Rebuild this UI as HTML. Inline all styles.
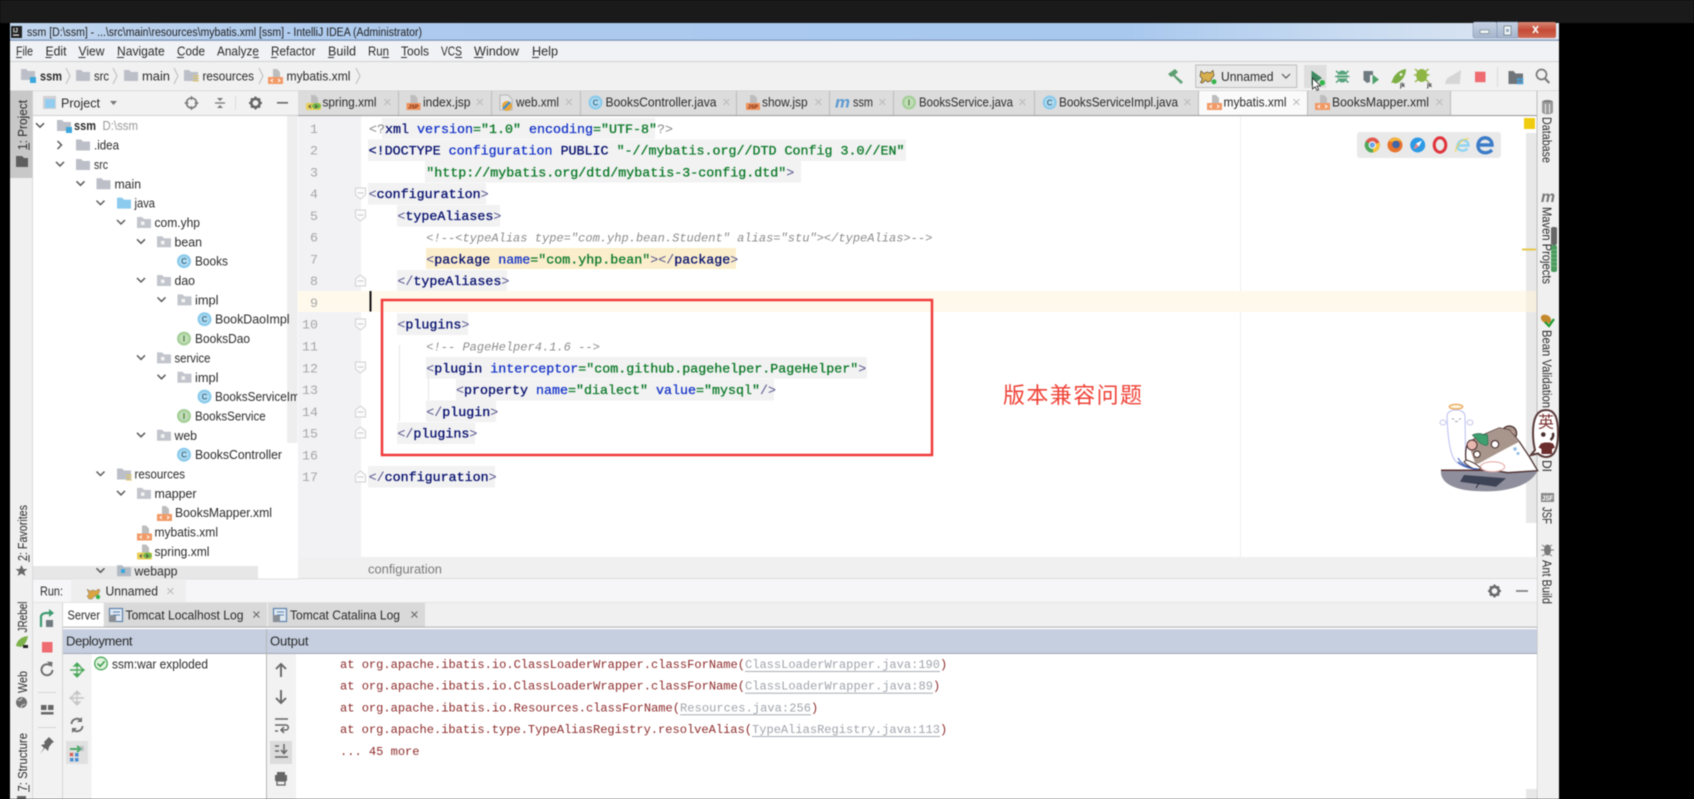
<!DOCTYPE html>
<html lang="en"><head><meta charset="utf-8"><title>ssm - IntelliJ IDEA</title>
<style>
html,body{margin:0;padding:0;background:#000;width:1694px;height:799px;overflow:hidden}
svg{display:block;filter:blur(.42px)}
text{font-family:"Liberation Sans","Noto Sans CJK SC",sans-serif;font-size:13.1px;fill:#2b2b2b;white-space:pre}
.m text{font-family:"Liberation Mono",monospace;font-size:13.33px}
.n{fill:#06106e;stroke:#06106e;stroke-width:.32}
.b{fill:#1232c8;stroke:#1232c8;stroke-width:.28}
.g{fill:#0d7a2a;stroke:#0d7a2a;stroke-width:.3}
.t{fill:#50508c}
.m text.cm{fill:#8c8c8c;font-style:italic;font-size:12.05px}
text.ln{font-family:"Liberation Mono",monospace;font-size:13.3px;fill:#a6a6a6;text-anchor:end}
text.o{font-family:"Liberation Mono",monospace;font-size:12.05px;fill:#8c2a2a}
text.l{fill:#a0a4ac}
text.x{fill:#bcbcbc;font-size:15px}
text.ic{font-size:8px;font-weight:bold;text-anchor:middle;fill:#3a6f8c}
text.jsp{font-size:5.5px;font-weight:bold;text-anchor:middle;fill:#7a2a10}
</style></head><body>
<svg width="1694" height="799" viewBox="0 0 1694 799" xmlns="http://www.w3.org/2000/svg">
<defs>
<linearGradient id="tb" x1="0" x2="1" y1="0" y2="0"><stop offset="0" stop-color="#c2d6ef"/><stop offset=".2" stop-color="#afcbee"/><stop offset=".72" stop-color="#a8c8ee"/><stop offset=".86" stop-color="#c8dbf1"/><stop offset="1" stop-color="#e0e8f2"/></linearGradient>
<linearGradient id="cl" x1="0" x2="0" y1="0" y2="1"><stop offset="0" stop-color="#d88a78"/><stop offset=".5" stop-color="#c44a35"/><stop offset="1" stop-color="#d06a55"/></linearGradient>
<linearGradient id="wb" x1="0" x2="0" y1="0" y2="1"><stop offset="0" stop-color="#c8d4e4"/><stop offset="1" stop-color="#a4b4cc"/></linearGradient>
<g id="f"><path d="M0 0h5l2 2h7v9H0z" fill="#bcbfc7"/></g>
<g id="p"><path d="M0 0h5l2 2h7v9H0z" fill="#c2c5cc"/><rect x="4" y="4.5" width="3.5" height="3.5" fill="#f4f4f4"/></g>
<g id="c"><circle r="7" fill="#8ccbec"/><circle r="4.6" fill="#b6def2"/></g>
<g id="i"><circle r="7" fill="#a6cf9a"/><circle r="4.6" fill="#c2dfb8"/></g>
<g id="x"><path d="M5 0h4l3 3v5H5z" fill="#bdbdbd"/><rect y="8" width="15" height="7" fill="#f29a66"/><path d="M5 10l-2 1.5 2 1.5M10 10l2 1.5-2 1.5" fill="none" stroke="#fff" stroke-width="1"/></g>
<g id="s"><path d="M5 0h4l3 3v5H5z" fill="#bdbdbd"/><rect y="8" width="15" height="7" rx="1" fill="#e8d05a"/><ellipse cx="10.5" cy="11" rx="4.500" ry="3" fill="#74b84a"/><path d="M5 10l-2 1.500 2 1.500M9 10l2 1.500-2 1.500" fill="none" stroke="#444" stroke-width="1"/></g>
<g id="j"><path d="M4 0h4l3 3v5H4z" fill="#bdbdbd"/><rect y="8" width="14" height="7" fill="#f0945e"/></g>
<g id="k"><path d="M0 -2.500l4 4 4-4" fill="none" stroke="#5a5a5a" stroke-width="1.500"/></g>
<clipPath id="tc"><rect x="33" y="115" width="264.500" height="464"/></clipPath>
</defs>

<!-- frame -->
<rect width="1694" height="799" fill="#000"/>
<rect width="1694" height="23" fill="#1a1a1a"/>
<rect x="10" y="23" width="1549" height="776" fill="#f0f0f0"/>

<!-- title bar -->
<rect x="10" y="23" width="1549" height="17" fill="url(#tb)"/>
<rect x="10" y="39.500" width="1549" height="1.300" fill="#7e97b8"/>
<rect x="11" y="26" width="11" height="12" fill="#222"/><rect x="13" y="34.500" width="6" height="1.200" fill="#eee"/><text x="13" y="32.500" style="font-size:6px;font-weight:bold;fill:#eee">IJ</text>
<text x="27" y="36" textLength="395" lengthAdjust="spacingAndGlyphs" style="font-size:11.500px;fill:#1f1f1f">ssm [D:\ssm] - ...\src\main\resources\mybatis.xml [ssm] - IntelliJ IDEA (Administrator)</text>
<rect x="1473" y="22" width="24" height="16" rx="2" fill="url(#wb)" stroke="#8296b0" stroke-width=".6"/>
<rect x="1497" y="22" width="21" height="16" fill="url(#wb)" stroke="#8296b0" stroke-width=".6"/>
<rect x="1518" y="22" width="38" height="16" rx="2" fill="url(#cl)"/>
<rect x="1480" y="30" width="9" height="3.500" fill="#eef3f8" stroke="#566" stroke-width=".5"/>
<rect x="1504" y="26" width="7" height="9" fill="#eef3f8" stroke="#566" stroke-width=".6"/><rect x="1506" y="29" width="3" height="3" fill="#9ab"/>
<path d="M1533 26l5 7M1538 26l-5 7" stroke="#f5f5f5" stroke-width="1.700"/>

<!-- menu -->
<rect x="10" y="41" width="1549" height="20" fill="#f1f2f5"/>
<rect x="10" y="61" width="1549" height="1" fill="#d2d2d2"/>
<g>
<text x="16" y="55.500" textLength="17" lengthAdjust="spacingAndGlyphs">File</text>
<text x="45.500" y="55.500" textLength="21" lengthAdjust="spacingAndGlyphs">Edit</text>
<text x="78.500" y="55.500" textLength="26" lengthAdjust="spacingAndGlyphs">View</text>
<text x="117" y="55.500" textLength="47.700" lengthAdjust="spacingAndGlyphs">Navigate</text>
<text x="177" y="55.500" textLength="28" lengthAdjust="spacingAndGlyphs">Code</text>
<text x="217" y="55.500" textLength="42" lengthAdjust="spacingAndGlyphs">Analyze</text>
<text x="271" y="55.500" textLength="44.500" lengthAdjust="spacingAndGlyphs">Refactor</text>
<text x="328" y="55.500" textLength="28" lengthAdjust="spacingAndGlyphs">Build</text>
<text x="368" y="55.500" textLength="21" lengthAdjust="spacingAndGlyphs">Run</text>
<text x="401" y="55.500" textLength="28" lengthAdjust="spacingAndGlyphs">Tools</text>
<text x="441" y="55.500" textLength="21" lengthAdjust="spacingAndGlyphs">VCS</text>
<text x="474" y="55.500" textLength="45" lengthAdjust="spacingAndGlyphs">Window</text>
<text x="532" y="55.500" textLength="26" lengthAdjust="spacingAndGlyphs">Help</text>
</g>
<g fill="#333"><rect x="16" y="57" width="6" height="1"/><rect x="45.500" y="57" width="6" height="1"/><rect x="78.500" y="57" width="7" height="1"/><rect x="117" y="57" width="7" height="1"/><rect x="177" y="57" width="7" height="1"/><rect x="253" y="57" width="6" height="1"/><rect x="271" y="57" width="6" height="1"/><rect x="328" y="57" width="6" height="1"/><rect x="382" y="57" width="7" height="1"/><rect x="401" y="57" width="6" height="1"/><rect x="455" y="57" width="7" height="1"/><rect x="474" y="57" width="9" height="1"/><rect x="532" y="57" width="7" height="1"/></g>

<!-- breadcrumb -->
<rect x="10" y="62" width="1549" height="29" fill="#f1f1f1"/>
<rect x="10" y="90.500" width="1549" height="1" fill="#c8c8c8"/>
<use href="#f" x="21" y="69"/><rect x="30" y="77" width="6" height="6" fill="#3ca7dc"/>
<text x="40" y="80.500" textLength="22" lengthAdjust="spacingAndGlyphs" style="font-weight:bold">ssm</text>
<path d="M66 68l4 8-4 8" fill="none" stroke="#bbb"/>
<use href="#f" x="76" y="70"/><text x="94" y="80.500" textLength="15" lengthAdjust="spacingAndGlyphs">src</text>
<path d="M113 68l4 8-4 8" fill="none" stroke="#bbb"/>
<use href="#f" x="124" y="70"/><text x="142" y="80.500" textLength="28" lengthAdjust="spacingAndGlyphs">main</text>
<path d="M174 68l4 8-4 8" fill="none" stroke="#bbb"/>
<use href="#f" x="184" y="70"/><path d="M193 76h6M193 78.500h6M193 81h6" stroke="#e3c45a"/><text x="202.500" y="80.500" textLength="51.500" lengthAdjust="spacingAndGlyphs">resources</text>
<path d="M259 68l4 8-4 8" fill="none" stroke="#bbb"/>
<use href="#x" x="268" y="69"/><text x="286.500" y="80.500" textLength="64" lengthAdjust="spacingAndGlyphs">mybatis.xml</text>
<path d="M356 68l4 8-4 8" fill="none" stroke="#bbb"/>

<!-- toolbar right -->
<path d="M1168 74l7-5 3 3-3 3 8 7-2 2-8-8-2 1z" fill="#5d9f73"/>
<rect x="1195.700" y="65" width="101" height="22.500" fill="#e9e9e9" stroke="#bdbdbd"/>
<path d="M1201 71l3 2.500 3-1.500 3 1 3-2.500 1 5-2.500 3-1 2.500-3 1-2-2-3 3-2-.5 2-3.500-2.500-3z" fill="#d9b04e" stroke="#6a5a3a" stroke-width=".8"/><circle cx="1214" cy="81.700" r="2.500" fill="#36b24a"/>
<text x="1221" y="81" textLength="52.500" lengthAdjust="spacingAndGlyphs">Unnamed</text>
<path d="M1282 74l4 4 4-4" fill="none" stroke="#555" stroke-width="1.200"/>
<rect x="1304" y="65" width="22.500" height="23" fill="#dedede"/>
<path d="M1311.500 70.500l10.500 7.500-10.500 7.500z" fill="#3f8a63"/><circle cx="1322.300" cy="82.700" r="2.700" fill="#2fb84a"/>
<path d="M1312.500 78v11l2.600-2.200 1.900 3.700 1.700-.9-1.800-3.600h3.600z" fill="#fff" stroke="#222" stroke-width=".8"/>
<path d="M1336 71l2.500 2M1348.500 71l-2.500 2M1335 76.500h3M1349.500 76.500h-3M1336 82.500l2.500-2M1348.500 82.500l-2.500-2" stroke="#55a27c" stroke-width="1.500"/><ellipse cx="1342.300" cy="76.500" rx="5" ry="6" fill="#55a27c"/><path d="M1338 75h8.500M1338 78h8.500" stroke="#d8ecd8" stroke-width=".9"/>
<path d="M1363.500 71h9.500v4h-3v7l-3 1-3.500-3z" fill="#6f7a80"/><path d="M1372.500 74.500l6.500 5-6.500 5z" fill="#4fa06c"/>
<path d="M1406 69c-7 1-12 6-13.500 11l-1.500 3 2.500-.5c.8 1 1.500 1 2.500 1 6-2 10-8 10-14.500z" fill="#7cae45"/><circle cx="1401" cy="74.500" r="1.500" fill="#e6f0d8"/><text x="1400" y="87" style="font-size:6px;font-weight:bold">jk</text>
<path d="M1415 69l3.500 3M1428.500 69l-3.500 3M1414 75h4M1429.500 75h-4M1415 82l3.500-3M1428.500 82l-3.500-3" stroke="#8fb545" stroke-width="1.400"/><ellipse cx="1421.700" cy="75.500" rx="5.500" ry="6.500" fill="#8fb545"/><text x="1427" y="87" style="font-size:6px;font-weight:bold">jk</text>
<path d="M1445 84c1-5 3-7 6-8l10-6c0 5-1 8-1 14z" fill="#d6d6d6"/>
<rect x="1475" y="71.700" width="10.500" height="10.500" fill="#ee6b70"/>
<rect x="1497" y="67" width="1" height="20" fill="#dadada"/>
<path d="M1508.500 71h5l2 2.500h7.500v10.500h-14.500z" fill="#70757a"/><rect x="1517" y="78" width="2.800" height="2.800" fill="#4b9fd8"/><rect x="1520.500" y="78" width="2.800" height="2.800" fill="#4b9fd8"/><rect x="1517" y="81.500" width="2.800" height="2.800" fill="#4b9fd8"/><rect x="1520.500" y="81.500" width="2.800" height="2.800" fill="#4b9fd8"/>
<circle cx="1541.500" cy="74.500" r="5" fill="none" stroke="#7a7a7a" stroke-width="1.700"/><path d="M1545 78.500l4.300 4.500" stroke="#7a7a7a" stroke-width="2.200"/>

<!-- left stripe -->
<rect x="10" y="91" width="22.500" height="708" fill="#f0f0f0"/>
<rect x="32.300" y="91" width="1" height="708" fill="#cfcfcf"/>
<rect x="10" y="91" width="22.300" height="87" fill="#c8c8c8"/>
<g><text transform="translate(27,150) rotate(-90)" textLength="50" lengthAdjust="spacingAndGlyphs">1: Project</text>
<rect x="28.500" y="143" width="1" height="7" fill="#333"/>
<path d="M16 156h6l2 2h4v9H16z" fill="#5e5e5e"/>
<text transform="translate(27,561) rotate(-90)" textLength="56" lengthAdjust="spacingAndGlyphs">2: Favorites</text>
<rect x="28.500" y="555" width="1" height="7" fill="#333"/>
<path d="M21.500 565l1.800 4h4.200l-3.400 2.700 1.400 4.300-4-2.500-4 2.500 1.400-4.300-3.400-2.700h4.200z" fill="#666"/>
<text transform="translate(27,632.500) rotate(-90)" textLength="31" lengthAdjust="spacingAndGlyphs">JRebel</text>
<path d="M16 646c1-5 4-9 12-10-1 5-3 9-7 11z" fill="#7db24a"/><rect x="23" y="645" width="5" height="3" fill="#222"/>
<text transform="translate(27,693) rotate(-90)" textLength="22" lengthAdjust="spacingAndGlyphs">Web</text>
<circle cx="21.500" cy="702.500" r="5.500" fill="#707070"/><path d="M18 700c2 1 3 0 4-2M21 708c0-3 2-3 4-4" stroke="#ddd" fill="none"/>
<text transform="translate(27,791.500) rotate(-90)" textLength="58.500" lengthAdjust="spacingAndGlyphs">7: Structure</text>
<rect x="28.500" y="785" width="1" height="7" fill="#333"/>
<rect x="17" y="796" width="9" height="3" fill="#666"/></g>

<!-- project panel header -->
<rect x="33" y="91" width="265" height="24" fill="#f2f2f2"/>
<rect x="43" y="96" width="13" height="13" fill="#d0d0d4"/><rect x="45" y="99" width="10" height="9" fill="#92cdf0"/>
<text x="61" y="107.500" textLength="39" lengthAdjust="spacingAndGlyphs">Project</text>
<path d="M110 101h7l-3.500 4z" fill="#777"/>
<circle cx="191.500" cy="103" r="5" fill="none" stroke="#777" stroke-width="1.600"/><path d="M191.500 96v4M191.500 106v4M184.500 103h4M194.500 103h4" stroke="#777" stroke-width="1.200"/>
<path d="M215 103h10" stroke="#777" stroke-width="1.300"/><path d="M220 101l-3-3h6zM220 105l-3 3h6z" fill="#777"/>
<rect x="235" y="96" width="1" height="14" fill="#dcdcdc"/>
<circle cx="255.500" cy="103" r="4.200" fill="none" stroke="#666" stroke-width="2.600"/><path d="M255.500 96.500v2M255.500 107.500v2M249 103h2M260 103h2M251 98.500l1.500 1.500M260 98.500l-1.500 1.500M251 107.500l1.500-1.500M260 107.500l-1.500-1.500" stroke="#666" stroke-width="2"/>
<rect x="277" y="102" width="11" height="1.600" fill="#666"/>
<rect x="33" y="115" width="265" height="1" fill="#cfcfcf"/>

<!-- project tree -->
<rect x="33" y="116" width="265" height="463" fill="#fff"/>
<rect x="287" y="116" width="10.500" height="327" fill="#eeeeee"/>
<rect x="33" y="566" width="225" height="12.500" fill="#e7e7e7"/>
<g clip-path="url(#tc)">
<use href="#k" x="36" y="125.700"/><use href="#f" x="57" y="120"/><rect x="66" y="127" width="6" height="6" fill="#3ca7dc"/>
<text x="74" y="130.200" textLength="22" lengthAdjust="spacingAndGlyphs" style="font-weight:bold">ssm</text><text x="102.500" y="130.200" textLength="35.500" lengthAdjust="spacingAndGlyphs" style="fill:#9a9a9a">D:\ssm</text>
<path d="M57.500 141l4 4-4 4" fill="none" stroke="#5a5a5a" stroke-width="1.500"/><use href="#f" x="76" y="139.500"/><text x="94" y="149.500" textLength="25" lengthAdjust="spacingAndGlyphs">.idea</text>
<use href="#k" x="56" y="164.400"/><use href="#f" x="76" y="159"/><text x="94" y="168.900" textLength="14" lengthAdjust="spacingAndGlyphs">src</text>
<use href="#k" x="76.500" y="183.800"/><use href="#f" x="96.500" y="178.300"/><text x="114.500" y="188.300" textLength="26.500" lengthAdjust="spacingAndGlyphs">main</text>
<use href="#k" x="96.500" y="203.100"/><path d="M117 197.600h5l2 2h7v9h-14z" fill="#8dcbee"/><text x="134.500" y="207.600" textLength="20.500" lengthAdjust="spacingAndGlyphs">java</text>
<use href="#k" x="117" y="222.500"/><use href="#p" x="137" y="217"/><text x="154.500" y="227" textLength="45.500" lengthAdjust="spacingAndGlyphs">com.yhp</text>
<use href="#k" x="137" y="241.800"/><use href="#p" x="157" y="236.300"/><text x="174.500" y="246.300" textLength="27.500" lengthAdjust="spacingAndGlyphs">bean</text>
<use href="#c" x="184" y="261.200"/><text class="ic" x="184" y="264">C</text><text x="195" y="265.700" textLength="33" lengthAdjust="spacingAndGlyphs">Books</text>
<use href="#k" x="137" y="280.500"/><use href="#p" x="157" y="275"/><text x="174.500" y="285" textLength="20.500" lengthAdjust="spacingAndGlyphs">dao</text>
<use href="#k" x="157.500" y="299.900"/><use href="#p" x="177.500" y="294.400"/><text x="195" y="304.400" textLength="23.500" lengthAdjust="spacingAndGlyphs">impl</text>
<use href="#c" x="204.500" y="319.200"/><text class="ic" x="204.500" y="322">C</text><text x="215" y="323.700" textLength="74.500" lengthAdjust="spacingAndGlyphs">BookDaoImpl</text>
<use href="#i" x="184" y="338.600"/><text class="ic" x="184" y="341.400" style="fill:#4d7a42">I</text><text x="195" y="343.100" textLength="55" lengthAdjust="spacingAndGlyphs">BooksDao</text>
<use href="#k" x="137" y="357.900"/><use href="#p" x="157" y="352.400"/><text x="174.500" y="362.400" textLength="36" lengthAdjust="spacingAndGlyphs">service</text>
<use href="#k" x="157.500" y="377.300"/><use href="#p" x="177.500" y="371.800"/><text x="195" y="381.800" textLength="23.500" lengthAdjust="spacingAndGlyphs">impl</text>
<use href="#c" x="204.500" y="396.600"/><text class="ic" x="204.500" y="399.400">C</text><text x="215" y="401.100" textLength="94" lengthAdjust="spacingAndGlyphs">BooksServiceImpl</text>
<use href="#i" x="184" y="416"/><text class="ic" x="184" y="418.800" style="fill:#4d7a42">I</text><text x="195" y="420.500" textLength="70.700" lengthAdjust="spacingAndGlyphs">BooksService</text>
<use href="#k" x="137" y="435.300"/><use href="#p" x="157" y="429.800"/><text x="174.500" y="439.800" textLength="22.500" lengthAdjust="spacingAndGlyphs">web</text>
<use href="#c" x="184" y="454.700"/><text class="ic" x="184" y="457.500">C</text><text x="195" y="459.200" textLength="87" lengthAdjust="spacingAndGlyphs">BooksController</text>
<use href="#k" x="96.500" y="474"/><use href="#f" x="117" y="468.500"/><path d="M126 475h6M126 477.500h6M126 480h6" stroke="#e3c45a"/><text x="134.500" y="478.500" textLength="50.500" lengthAdjust="spacingAndGlyphs">resources</text>
<use href="#k" x="117" y="493.400"/><use href="#p" x="137" y="487.900"/><text x="154.500" y="497.900" textLength="42" lengthAdjust="spacingAndGlyphs">mapper</text>
<use href="#x" x="157" y="506"/><text x="175" y="517.200" textLength="97" lengthAdjust="spacingAndGlyphs">BooksMapper.xml</text>
<use href="#x" x="137" y="525.500"/><text x="154.500" y="536.600" textLength="63.500" lengthAdjust="spacingAndGlyphs">mybatis.xml</text>
<use href="#s" x="137" y="544.500"/><text x="154.500" y="555.900" textLength="55" lengthAdjust="spacingAndGlyphs">spring.xml</text>
<use href="#k" x="96.500" y="570.800"/><path d="M117 565.300h5l2 2h7v9h-14z" fill="#b4bac4"/><rect x="121" y="569" width="4" height="4" fill="#3ca7dc"/><text x="134.500" y="575.300" textLength="43" lengthAdjust="spacingAndGlyphs">webapp</text>
</g>

<!-- editor tabs -->
<rect x="298" y="91" width="1239" height="24" fill="#f2f2f2"/>
<rect x="298" y="91" width="1152" height="24" fill="#dcdcdc"/>
<rect x="1198.500" y="91" width="108.500" height="24" fill="#fafafa"/>
<g fill="#bcbcbc"><rect x="398" y="91" width="1" height="24"/><rect x="491" y="91" width="1" height="24"/><rect x="580" y="91" width="1" height="24"/><rect x="736" y="91" width="1" height="24"/><rect x="829" y="91" width="1" height="24"/><rect x="893" y="91" width="1" height="24"/><rect x="1034" y="91" width="1" height="24"/><rect x="1198" y="91" width="1" height="24"/><rect x="1307" y="91" width="1" height="24"/><rect x="1450" y="91" width="1" height="24"/></g>
<rect x="298" y="115" width="1239" height="1.200" fill="#9d9d9d"/>
<use href="#s" x="306" y="95"/><text x="322.500" y="106.500" textLength="54" lengthAdjust="spacingAndGlyphs">spring.xml</text><text class="x" x="383" y="107">×</text>
<use href="#j" x="406.500" y="95"/><text class="jsp" x="413.500" y="108.500">JSP</text><text x="423" y="106.500" textLength="47.500" lengthAdjust="spacingAndGlyphs">index.jsp</text><text class="x" x="475.500" y="107">×</text>
<path d="M500 95h8l4 4v11h-12z" fill="#e6e6e6" stroke="#aaa" stroke-width=".8"/><circle cx="507" cy="106" r="5" fill="#e8a53a"/><path d="M503 109l7-7" stroke="#3b8fd8" stroke-width="2"/>
<text x="516" y="106.500" textLength="43" lengthAdjust="spacingAndGlyphs">web.xml</text><text class="x" x="564.500" y="107">×</text>
<use href="#c" x="595.500" y="102.500"/><text class="ic" x="595.500" y="105.300">C</text><text x="605.500" y="106.500" textLength="111" lengthAdjust="spacingAndGlyphs">BooksController.java</text><text class="x" x="722" y="107">×</text>
<use href="#j" x="746" y="95"/><text class="jsp" x="753" y="108.500">JSP</text><text x="762" y="106.500" textLength="45.600" lengthAdjust="spacingAndGlyphs">show.jsp</text><text class="x" x="814" y="107">×</text>
<text x="835" y="107.500" textLength="15" lengthAdjust="spacingAndGlyphs" style="font-size:16px;font-style:italic;font-weight:bold;fill:#5d9ad2">m</text>
<text x="853" y="106.500" textLength="20" lengthAdjust="spacingAndGlyphs">ssm</text><text class="x" x="878" y="107">×</text>
<use href="#i" x="909" y="102.500"/><text class="ic" x="909" y="105.300" style="fill:#4d7a42">I</text><text x="919" y="106.500" textLength="94" lengthAdjust="spacingAndGlyphs">BooksService.java</text><text class="x" x="1018" y="107">×</text>
<use href="#c" x="1049.700" y="102.500"/><text class="ic" x="1049.700" y="105.300">C</text><text x="1059" y="106.500" textLength="119" lengthAdjust="spacingAndGlyphs">BooksServiceImpl.java</text><text class="x" x="1183" y="107">×</text>
<use href="#x" x="1207" y="95"/><text x="1223.500" y="106.500" textLength="63" lengthAdjust="spacingAndGlyphs">mybatis.xml</text><text class="x" x="1292" y="107">×</text>
<use href="#x" x="1315" y="95"/><text x="1332" y="106.500" textLength="97" lengthAdjust="spacingAndGlyphs">BooksMapper.xml</text><text class="x" x="1435" y="107">×</text>

<!-- editor -->
<rect x="298" y="116.200" width="63" height="441" fill="#f2f2f4"/>
<rect x="361" y="116.200" width="1176" height="441" fill="#fff"/>
<rect x="1240" y="116.200" width="1" height="441" fill="#eeeeee"/>
<rect x="298" y="291" width="1239" height="21" fill="#fff9ec"/>
<!-- tag backgrounds -->
<g fill="#f2f2f2">
<rect x="382" y="118" width="273" height="21"/>
<rect x="368" y="139.500" width="538" height="21.500"/>
<rect x="425" y="161" width="376" height="21.500"/>
<rect x="368" y="183" width="118" height="21.500"/>
<rect x="397" y="205" width="103" height="21.500"/>
<rect x="397" y="270" width="110" height="21"/>
<rect x="397" y="313.500" width="71" height="21.500"/>
<rect x="426" y="357" width="441" height="21.500"/>
<rect x="456" y="379" width="318" height="21.500"/>
<rect x="426" y="400.500" width="70" height="21.500"/>
<rect x="397" y="422.500" width="78" height="21.500"/>
<rect x="368" y="466" width="127" height="21.500"/>
</g>
<rect x="426" y="248" width="310" height="21" fill="#fbeecc"/>
<rect x="399" y="345" width="1" height="76" fill="#e6e6e6"/><rect x="428" y="367" width="1" height="33" fill="#e6e6e6"/>

<!-- line numbers -->
<text class="ln" x="318" y="133">1</text><text class="ln" x="318" y="154.500">2</text><text class="ln" x="318" y="176.300">3</text><text class="ln" x="318" y="198">4</text><text class="ln" x="318" y="219.800">5</text><text class="ln" x="318" y="241.600">6</text><text class="ln" x="318" y="263.400">7</text><text class="ln" x="318" y="285.200">8</text><text class="ln" x="318" y="307">9</text><text class="ln" x="318" y="328.700">10</text><text class="ln" x="318" y="350.500">11</text><text class="ln" x="318" y="372.300">12</text><text class="ln" x="318" y="394">13</text><text class="ln" x="318" y="415.800">14</text><text class="ln" x="318" y="437.600">15</text><text class="ln" x="318" y="459.400">16</text><text class="ln" x="318" y="481.100">17</text>
<!-- fold markers -->
<g fill="#fbfbfb" stroke="#d0d0d0">
<path d="M355.500 188h10v7l-5 4-5-4z"/><path d="M355.500 210h10v7l-5 4-5-4z"/><path d="M355.500 319h10v7l-5 4-5-4z"/><path d="M355.500 362h10v7l-5 4-5-4z"/>
<path d="M355.500 286v-7l5-4 5 4v7z"/><path d="M355.500 417v-7l5-4 5 4v7z"/><path d="M355.500 438v-7l5-4 5 4v7z"/><path d="M355.500 482v-7l5-4 5 4v7z"/>
</g>
<path d="M357.500 193h6M357.500 215h6M357.500 324h6M357.500 367h6M357.500 281h6M357.500 412h6M357.500 433h6M357.500 477h6" stroke="#c8c8c8"/>

<!-- code -->
<g class="m">
<text x="369" y="132.800"><tspan style="fill:#888">&lt;?</tspan><tspan class="n">xml</tspan> <tspan class="b">version</tspan><tspan class="g">="1.0"</tspan> <tspan class="b">encoding</tspan><tspan class="g">="UTF-8"</tspan><tspan style="fill:#888">?&gt;</tspan></text>
<text x="368.600" y="154.600"><tspan class="n">&lt;!DOCTYPE</tspan> <tspan class="b">configuration</tspan> <tspan class="n">PUBLIC</tspan> <tspan class="g">"-//mybatis.org//DTD Config 3.0//EN"</tspan></text>
<text x="426.300" y="176.300"><tspan class="g">"http://mybatis.org/dtd/mybatis-3-config.dtd"</tspan><tspan class="t">&gt;</tspan></text>
<text x="368.600" y="198"><tspan class="t">&lt;</tspan><tspan class="n">configuration</tspan><tspan class="t">&gt;</tspan></text>
<text x="397.400" y="219.800"><tspan class="t">&lt;</tspan><tspan class="n">typeAliases</tspan><tspan class="t">&gt;</tspan></text>
<text x="426.300" y="241.600" class="cm">&lt;!--&lt;typeAlias type="com.yhp.bean.Student" alias="stu"&gt;&lt;/typeAlias&gt;--&gt;</text>
<text x="426.300" y="263.400"><tspan class="t">&lt;</tspan><tspan class="n">package</tspan> <tspan class="b">name</tspan><tspan class="g">="com.yhp.bean"</tspan><tspan class="t">&gt;&lt;/</tspan><tspan class="n">package</tspan><tspan class="t">&gt;</tspan></text>
<text x="397.400" y="285.100"><tspan class="t">&lt;/</tspan><tspan class="n">typeAliases</tspan><tspan class="t">&gt;</tspan></text>
<text x="397.400" y="328.700"><tspan class="t">&lt;</tspan><tspan class="n">plugins</tspan><tspan class="t">&gt;</tspan></text>
<text x="426.300" y="350.500" class="cm">&lt;!-- PageHelper4.1.6 --&gt;</text>
<text x="426.300" y="372.300"><tspan class="t">&lt;</tspan><tspan class="n">plugin</tspan> <tspan class="b">interceptor</tspan><tspan class="g">="com.github.pagehelper.PageHelper"</tspan><tspan class="t">&gt;</tspan></text>
<text x="456" y="394"><tspan class="t">&lt;</tspan><tspan class="n">property</tspan> <tspan class="b">name</tspan><tspan class="g">="dialect"</tspan> <tspan class="b">value</tspan><tspan class="g">="mysql"</tspan><tspan class="t">/&gt;</tspan></text>
<text x="426.300" y="415.800"><tspan class="t">&lt;/</tspan><tspan class="n">plugin</tspan><tspan class="t">&gt;</tspan></text>
<text x="397.400" y="437.600"><tspan class="t">&lt;/</tspan><tspan class="n">plugins</tspan><tspan class="t">&gt;</tspan></text>
<text x="368.600" y="481.100"><tspan class="t">&lt;/</tspan><tspan class="n">configuration</tspan><tspan class="t">&gt;</tspan></text>
</g>
<rect x="369.500" y="291" width="2" height="20.500" fill="#111"/>
<rect x="382" y="300" width="550" height="155" fill="none" stroke="#f03a3a" stroke-width="2.500"/>
<text x="1003" y="403" textLength="139" style="font-size:22px;fill:#ef4136;font-family:'Noto Sans CJK SC','WenQuanYi Zen Hei',sans-serif">版本兼容问题</text>

<!-- browser icons -->
<rect x="1357" y="132" width="144" height="26" rx="3" fill="#e9e9e9"/>
<circle cx="1372.300" cy="145" r="7.500" fill="#e2574c"/><path d="M1372.300 145l-6.500-3.700a7.500 7.500 0 0 0 7.500 11.200z" fill="#4fa95a"/><path d="M1372.300 145l1 7.500a7.500 7.500 0 0 0 6-10z" fill="#f4c63d"/><circle cx="1372.300" cy="145" r="3.200" fill="#6aa4e6" stroke="#fff"/>
<circle cx="1395" cy="145" r="7.500" fill="#e8732c"/><circle cx="1396" cy="144.500" r="3.800" fill="#3f66a8"/><path d="M1389 141c3-4 11-5 13 1-3-2-7-2-10 0z" fill="#f4b93c"/>
<circle cx="1417.700" cy="145" r="7.500" fill="#2d9ae6"/><path d="M1422 140.500l-3 6-3-3z" fill="#fff"/><path d="M1413.500 149.500l5.500-3-3-3z" fill="#e88"/>
<ellipse cx="1440" cy="145" rx="5.800" ry="7.200" fill="none" stroke="#e0333c" stroke-width="3"/>
<path d="M1457 145.500h11.500c0-6-9-8-11 0-1 5 6 7 10 3" fill="none" stroke="#8fd4f0" stroke-width="2.400"/><path d="M1456 152c-2-4 6-14 13-13" fill="none" stroke="#f2d04a" stroke-width="1"/>
<path d="M1479.500 145h12.500c0-9-13-10-14 0-.5 8 9 10 14 5" fill="none" stroke="#3b7cc8" stroke-width="3.400"/>

<!-- right scrollbar/stripe -->
<rect x="1526" y="133" width="11" height="390" fill="#e8e8e8"/>
<rect x="1526" y="291" width="11" height="21" fill="#f6efdf"/>
<rect x="1524" y="118" width="11" height="11" fill="#f0cc10"/>
<rect x="1522" y="248.500" width="14" height="2" fill="#e6c84c"/>
<rect x="1537" y="91" width="22" height="708" fill="#f0f0f0"/>
<rect x="1536.500" y="91" width="1" height="708" fill="#bdbdbd"/>

<g>
<ellipse cx="1547.500" cy="102" rx="5.500" ry="2" fill="#7a7a7a"/><path d="M1542 102v10c0 3 11 3 11 0v-10" fill="#9a9a9a"/><path d="M1545.500 104v9M1549.500 104v9" stroke="#eee"/>
<text transform="translate(1542.500,117) rotate(90)" textLength="46" lengthAdjust="spacingAndGlyphs">Database</text>
<text x="1541" y="202" textLength="14" lengthAdjust="spacingAndGlyphs" style="font-size:16px;font-weight:bold;font-style:italic;fill:#777">m</text>
<text transform="translate(1542.500,207) rotate(90)" textLength="77" lengthAdjust="spacingAndGlyphs">Maven Projects</text>
<rect x="1551" y="227" width="6" height="18" rx="2" fill="#666"/><rect x="1551" y="245" width="6" height="27" rx="2" fill="#4b9a5e"/><path d="M1551 250h6M1551 254h6M1551 258h6M1551 262h6M1551 266h6" stroke="#7bbd8b" stroke-width=".7"/>
<ellipse cx="1546" cy="319" rx="5.500" ry="4" transform="rotate(30 1546 319)" fill="#c38a2d"/><path d="M1545 322l4 4 5-7" fill="none" stroke="#1f9a2e" stroke-width="2.200"/>
<text transform="translate(1542.500,330) rotate(90)" textLength="78" lengthAdjust="spacingAndGlyphs">Bean Validation</text>
<text transform="translate(1542.500,460) rotate(90)" textLength="12" lengthAdjust="spacingAndGlyphs">DI</text>
<rect x="1541" y="493" width="13" height="9" fill="#8a8a8a"/><text x="1542" y="500.500" textLength="11" lengthAdjust="spacingAndGlyphs" style="font-size:7px;font-weight:bold;fill:#fff">JSF</text>
<text transform="translate(1542.500,507) rotate(90)" textLength="17" lengthAdjust="spacingAndGlyphs">JSF</text>
<ellipse cx="1547.500" cy="550" rx="3.500" ry="5.500" fill="#7a7a7a"/><path d="M1542 545l5 3 5-3M1541 550h13M1542 556l5-3 5 3" stroke="#7a7a7a" fill="none"/>
<text transform="translate(1542.500,560) rotate(90)" textLength="44" lengthAdjust="spacingAndGlyphs">Ant Build</text>
</g>

<!-- sticker -->
<g>
<path d="M1441 471c-1 12 14 19 34 20 26 2 55-3 63-21z" fill="#8e8e9c"/>
<path d="M1464 475l42 3.300-10 8.400-36-5z" fill="#3e4356"/><path d="M1476 488l3-5" stroke="#2a2a3a" stroke-width="1"/>
<path d="M1447 416c0-8 18-8 18 0l.5 38c2 6 6 10 12 14-10 1-21-2-25-12-3-8-5-24-5.500-40z" fill="#fff" stroke="#bfc3f2" stroke-width="1.100"/>
<path d="M1458 458c4 7 11 10 20 11" fill="none" stroke="#4d6fc0" stroke-width="1.200"/>
<ellipse cx="1456" cy="406.700" rx="6.700" ry="2.300" fill="#fff3dc" stroke="#e8a456" stroke-width="1.300"/>
<ellipse cx="1443" cy="422.500" rx="3" ry="2.500" fill="#fff" stroke="#c3c6ea"/><ellipse cx="1470" cy="422.500" rx="3" ry="2.500" fill="#fff" stroke="#c3c6ea"/>
<path d="M1452 418.500l2 1M1461 418.500l-2 1M1455 421.500h3" stroke="#8a8a9a" stroke-width=".7" fill="none"/>
<rect x="1441" y="469.500" width="97" height="1.500" fill="#5a3030"/>
<circle cx="1509.300" cy="433.300" r="7.300" fill="#a8968c" stroke="#4a2f2f" stroke-width="1.300"/><circle cx="1510" cy="434" r="3.800" fill="#dcb0a8"/>
<path d="M1466 460c-1-7 0-13 2-17l8-5 23.300-10 10 2 10 11.700 10 15 8.400 14-30 2-26.700-4.300z" fill="#fff" stroke="#4a2f2f" stroke-width="1.300"/>
<path d="M1468 444l8-6 23.300-10 10 2 10 11.700c-14 7-27 14-40 21.600l-4 .700-1.300-4c-2-5-3-10-6-16z" fill="#a8968c"/>
<circle cx="1472" cy="445" r="5" fill="#e8b8b0" stroke="#4a2f2f" stroke-width="1"/>
<circle cx="1495" cy="444.300" r="3.700" fill="#fff" stroke="#4a2f2f" stroke-width="1.100"/><circle cx="1477" cy="454.300" r="3.200" fill="#fff" stroke="#4a2f2f" stroke-width="1.100"/>
<path d="M1472.500 435c4-2 9-2 11 0 1-1 3-1 4 0l.500 9-1.500 1.500c-5-1-8-3-9.500-6-1.800-2-3.500-3-4.500-4.500z" fill="#3fa06f" stroke="#2c6b4f" stroke-width=".7"/>
<path d="M1466 460c5 1 12 5 15 8.500l-4 1.500c-4-1-9-4-13-8z" fill="#fff" stroke="#4a2f2f" stroke-width="1"/>
<path d="M1458 462c5 4 12 7 20 7" fill="none" stroke="#3d5fb0" stroke-width="1.300"/>
<ellipse cx="1492.700" cy="466.700" rx="12" ry="5" fill="#fff" stroke="#e2a39d" stroke-width="1"/>
<circle cx="1515" cy="449" r="1.700" fill="#8fbbe8"/><circle cx="1518" cy="453.500" r="1.500" fill="#8fbbe8"/>
<path d="M1546 410c-8 0-13 7-13 23 0 8 1 13 2 17l-4 5 7-1.500c2 2 5 3.500 8 3.500 8 0 12-7 12-24s-4-23-12-23z" fill="#fff" stroke="#5a3a3a" stroke-width="2"/>
<text x="1546" y="427.500" text-anchor="middle" style="font-size:16px;fill:#7a2f2f;font-family:'Noto Sans CJK SC',sans-serif">英</text>
<circle cx="1543.300" cy="434.500" r="2.300" fill="#4a2f2f"/><path d="M1552.500 433c1.500 2 .5 5-2 7" fill="none" stroke="#4a2f2f" stroke-width="2.500"/>
<path d="M1541 443.500l3.500-1h5l3.500 1 2 4-3 1.500v5h-10.500v-5l-3-1.500z" fill="#6b2c2c"/>
</g>

<!-- editor breadcrumb -->
<rect x="298" y="557" width="1239" height="21" fill="#f0f0f1"/>
<rect x="298" y="578" width="1239" height="1" fill="#dedede"/>
<text x="368" y="573.500" textLength="74" lengthAdjust="spacingAndGlyphs" style="fill:#7a7a7a">configuration</text>

<!-- run bar -->
<rect x="33" y="579" width="1504" height="23" fill="#f6f6f8"/>
<rect x="33" y="578.500" width="265" height="1" fill="#dedede"/>
<rect x="33" y="602" width="1504" height="1" fill="#e3e3e3"/>
<rect x="71" y="579" width="115" height="23" fill="#eeeeee"/>
<text x="40" y="595.500" textLength="23" lengthAdjust="spacingAndGlyphs">Run:</text>
<path d="M87 589l3 2 3-1 3 1 2-2 2 1-2 5-3 1-3 3h-3l-2-3 2-2z" fill="#d9a441" stroke="#666" stroke-width=".4"/><circle cx="98" cy="597" r="2.200" fill="#36b24a"/>
<text x="105.500" y="595.500" textLength="52.500" lengthAdjust="spacingAndGlyphs">Unnamed</text><text class="x" x="166" y="596">×</text>
<circle cx="1494.500" cy="591" r="4.200" fill="none" stroke="#6a6a6a" stroke-width="2.600"/><path d="M1494.500 584.500v2M1494.500 595.500v2M1488 591h2M1499 591h2M1490 586.500l1.500 1.500M1499 586.500l-1.500 1.500M1490 595.500l1.500-1.500M1499 595.500l-1.500-1.500" stroke="#6a6a6a" stroke-width="2"/>
<rect x="1516" y="590.200" width="12" height="1.600" fill="#777"/>

<!-- run content tabs -->
<rect x="33" y="603" width="1504" height="24" fill="#f0f0f0"/>
<rect x="62" y="603" width="41.500" height="24" fill="#fff"/>
<rect x="104" y="603" width="163" height="24" fill="#d9d9d9"/>
<rect x="268" y="603" width="157" height="24" fill="#d9d9d9"/>
<rect x="62" y="626.700" width="1475" height="1" fill="#a8a8a8"/><rect x="62" y="627.700" width="1475" height="1.500" fill="#fff"/>
<text x="67.500" y="619.500" textLength="32.500" lengthAdjust="spacingAndGlyphs">Server</text>
<rect x="109.500" y="608.500" width="13" height="13" fill="#dfe8f2" stroke="#5d84ad" stroke-width="1.200"/><rect x="109" y="615" width="7" height="7" fill="#8a8f96"/><path d="M113 612h7M113 615h7" stroke="#5d84ad"/>
<text x="125.500" y="619.500" textLength="118" lengthAdjust="spacingAndGlyphs">Tomcat Localhost Log</text><text class="x" x="252" y="619.500" style="fill:#666">×</text>
<rect x="273.500" y="608.500" width="13" height="13" fill="#dfe8f2" stroke="#5d84ad" stroke-width="1.200"/><rect x="273" y="615" width="7" height="7" fill="#8a8f96"/><path d="M277 612h7M277 615h7" stroke="#5d84ad"/>
<text x="290" y="619.500" textLength="110" lengthAdjust="spacingAndGlyphs">Tomcat Catalina Log</text><text class="x" x="410" y="619.500" style="fill:#666">×</text>

<!-- header -->
<rect x="62" y="629.200" width="1475" height="23.800" fill="#c5cfe0"/>
<rect x="62" y="653" width="1475" height="1" fill="#9ea8b8"/>
<text x="66" y="645.500" textLength="66.500" lengthAdjust="spacing">Deployment</text>
<text x="270" y="645.500" textLength="38.500" lengthAdjust="spacing">Output</text>

<!-- run panels -->
<rect x="33" y="603" width="29" height="196" fill="#f2f2f2"/>
<rect x="62" y="603" width="1" height="196" fill="#d5d5d5"/>
<rect x="63" y="654" width="28.500" height="145" fill="#f2f2f2"/>
<rect x="91.500" y="654" width="174.500" height="145" fill="#fff"/>
<rect x="266" y="629" width="1" height="170" fill="#b5b5b5"/>
<rect x="267" y="654" width="29" height="145" fill="#f2f2f2"/>
<rect x="296" y="654" width="1241" height="145" fill="#fff"/>
<rect x="1526" y="789" width="11" height="10" fill="#e8e8e8"/>

<!-- run toolbar icons -->
<path d="M41 627v-10c0-3 3-4 6-4h3" fill="none" stroke="#3d9a70" stroke-width="2.200"/><path d="M49 609l5 4-5 4z" fill="#3d9a70"/><rect x="46" y="620" width="7" height="7" fill="#6f7a80"/>
<rect x="42" y="642" width="10.500" height="10.500" fill="#ee6b70"/>
<path d="M52.500 670a5.500 5.500 0 1 1-2-4.500" fill="none" stroke="#707070" stroke-width="2"/><path d="M47 661.500l5.500 0.500-0.500 5.500z" fill="#707070"/>
<rect x="38" y="692" width="18" height="1" fill="#d5d5d5"/>
<rect x="41" y="705" width="5.500" height="5" fill="#666"/><rect x="48" y="705" width="5.500" height="5" fill="#666"/><rect x="41" y="712" width="12.500" height="2.500" fill="#666"/>
<rect x="38" y="727" width="18" height="1" fill="#d5d5d5"/>
<path d="M44 742l5-5 5 5-2 1-3 4-1 4-3-3-5 6 4-6-3-3 4-1z" fill="#666"/>

<path d="M77 663v14M77 663l-3 3h6zM77 677l-3-3h6z" stroke="#4aa85a" stroke-width="1.200" fill="#4aa85a"/><path d="M70 670h14M80 667l4 3-4 3" stroke="#4aa85a" stroke-width="1.400" fill="none"/>
<g opacity=".35"><path d="M77 691v14M77 691l-3 3h6zM77 705l-3-3h6z" stroke="#777" stroke-width="1.200" fill="#777"/><path d="M70 698h14M74 695l-4 3 4 3" stroke="#777" stroke-width="1.400" fill="none"/></g>
<path d="M71.500 724a5.500 5.500 0 0 1 9.500-3.500M82.500 726a5.500 5.500 0 0 1-9.500 3.500" fill="none" stroke="#707070" stroke-width="1.900"/><path d="M82 717v5h-5zM72 733v-5h5z" fill="#707070"/>
<rect x="66" y="741" width="22" height="23" fill="#e0e0e0"/>
<path d="M70 749h11M77 746l4 3-4 3" stroke="#38a35a" stroke-width="1.700" fill="none"/><rect x="79" y="746" width="5" height="5" fill="#9aa" opacity=".5"/>
<path d="M70 753l3 3M73 753l-3 3" stroke="#d64a3a" stroke-width="1.300"/><rect x="70" y="758" width="3.500" height="3.500" fill="#4b8fd4"/><rect x="75" y="758" width="3.500" height="3.500" fill="#4b8fd4"/><rect x="75" y="753" width="3.500" height="3.500" fill="#4b8fd4"/>

<circle cx="101" cy="663.500" r="6.300" fill="#dff2dc" stroke="#4aa85a" stroke-width="1.300"/><path d="M97.500 663.500l2.700 2.800 4.500-5" fill="none" stroke="#3b9a4c" stroke-width="1.500"/>
<text x="112" y="668.500" textLength="96" lengthAdjust="spacingAndGlyphs">ssm:war exploded</text>

<path d="M281 677v-13M276 669l5-5 5 5" fill="none" stroke="#666" stroke-width="1.900"/>
<path d="M281 690v13M276 698l5 5 5-5" fill="none" stroke="#666" stroke-width="1.900"/>
<path d="M275 719h13M275 725h11c3 0 3 5 0 5h-4M284 727l-3 3 3 3M275 731h3" fill="none" stroke="#666" stroke-width="1.500"/>
<rect x="270" y="741" width="22" height="23" fill="#dcdcdc"/>
<path d="M275 746h4M275 751h4M275 757h13M284 744v9M281 750l3 3.500 3-3.500" fill="none" stroke="#666" stroke-width="1.500"/>
<path d="M277 775v-3h8v3" fill="#666"/><rect x="275" y="775" width="12" height="6" fill="#666"/><rect x="277" y="781" width="8" height="4" fill="none" stroke="#666" stroke-width="1.300"/>

<!-- output -->
<text class="o" x="340" y="668" textLength="405" lengthAdjust="spacing">at org.apache.ibatis.io.ClassLoaderWrapper.classForName(</text>
<text class="o l" x="745" y="668" textLength="195" lengthAdjust="spacing">ClassLoaderWrapper.java:190</text><text class="o" x="940" y="668">)</text>
<rect x="745" y="671" width="195" height="1" fill="#a8acb3"/>
<text class="o" x="340" y="689.700" textLength="405" lengthAdjust="spacing">at org.apache.ibatis.io.ClassLoaderWrapper.classForName(</text>
<text class="o l" x="745" y="689.700" textLength="188" lengthAdjust="spacing">ClassLoaderWrapper.java:89</text><text class="o" x="933" y="689.700">)</text>
<rect x="745" y="692.700" width="188" height="1" fill="#a8acb3"/>
<text class="o" x="340" y="711.300" textLength="340" lengthAdjust="spacing">at org.apache.ibatis.io.Resources.classForName(</text>
<text class="o l" x="680" y="711.300" textLength="131" lengthAdjust="spacing">Resources.java:256</text><text class="o" x="811" y="711.300">)</text>
<rect x="680" y="714.300" width="131" height="1" fill="#a8acb3"/>
<text class="o" x="340" y="733" textLength="412" lengthAdjust="spacing">at org.apache.ibatis.type.TypeAliasRegistry.resolveAlias(</text>
<text class="o l" x="752" y="733" textLength="188" lengthAdjust="spacing">TypeAliasRegistry.java:113</text><text class="o" x="940" y="733">)</text>
<rect x="752" y="736" width="188" height="1" fill="#a8acb3"/>
<text class="o" x="340" y="755" textLength="79.500" lengthAdjust="spacing">... 45 more</text>
</svg>
</body></html>
